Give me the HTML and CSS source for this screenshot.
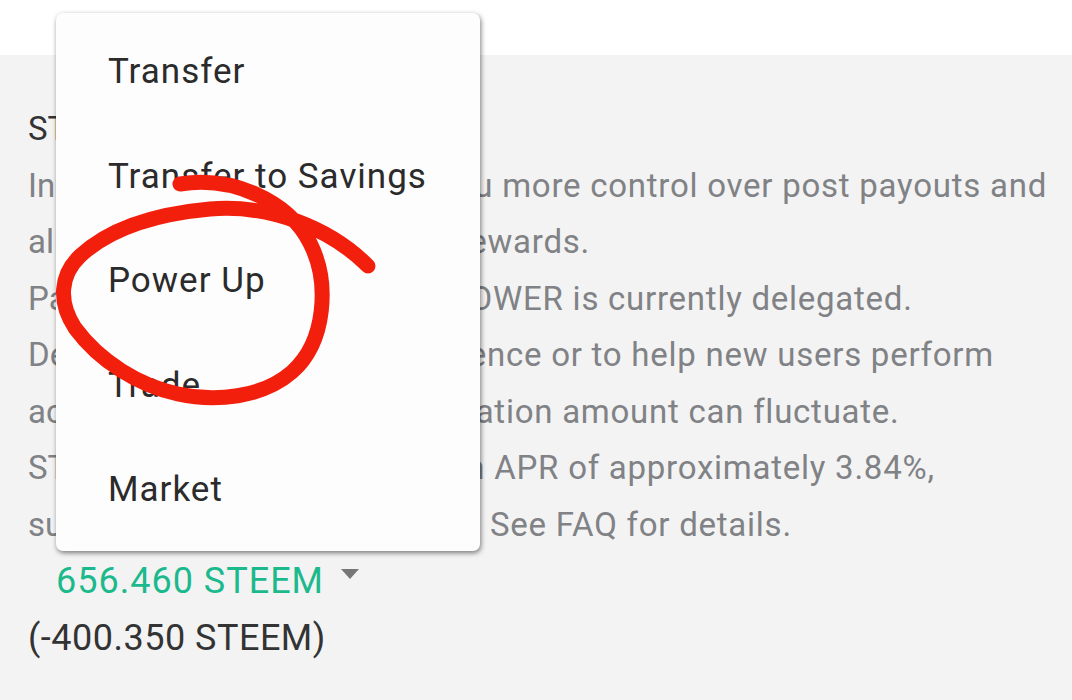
FILE: index.html
```html
<!DOCTYPE html>
<html lang="en">
<head>
    <meta charset="UTF-8">
    <meta name="viewport" content="width=device-width, initial-scale=1.0">
    <title>Steem Power</title>
    <link rel="stylesheet" href="styles.css">
</head>
<body>
    <div class="topbar"></div>

    <div class="wallet">
        <h2 class="title">STEEM POWER</h2>
        <!-- each line is split where the menu covers it, the tail is the part still in view -->
        <p class="desc">
            <span>Influence tokens which give yo<span class="tail">u more control over post payouts and</span></span>
            <span>allow you to earn on curation r<span class="tail">ewards.</span></span>
            <span>Part of stevenson7's STEEM P<span class="tail">OWER is currently delegated.</span></span>
            <span>Delegation is donated for infl<span class="tail">uence or to help new users perform</span></span>
            <span>actions on Steemit. Your dele<span class="tail">gation amount can fluctuate.</span></span>
            <span>STEEM POWER increases at a<span class="tail">n APR of approximately 3.84%,</span></span>
            <span>subject to blockchain variance<span class="tail">. See FAQ for details.</span></span>
        </p>
        <div class="amount">
            <span class="value">656.460 STEEM</span>
            <span class="caret"></span>
        </div>
        <div class="delegated">(-400.350 STEEM)</div>
    </div>

    <ul class="menu">
        <li>Transfer</li>
        <li>Transfer to Savings</li>
        <li>Power Up</li>
        <li>Trade</li>
        <li>Market</li>
    </ul>

    <!-- hand drawn mark over the menu -->
    <svg class="scribble" width="1072" height="700" viewBox="0 0 1072 700">
        <path d="M180,184 C232,176 288,200 310,243 C330,282 326,342 292,372 C262,398 215,402 178,394 C140,386 100,362 75,328 C58,302 60,275 80,256 C110,228 155,214 210,209 C270,204 330,228 368,266"
              fill="none" stroke="#f31f0d" stroke-width="15" stroke-linecap="round" stroke-linejoin="round"/>
    </svg>
</body>
</html>
```

FILE: styles.css
```css
body {
    margin: 0;
    padding: 0;
    background-color: #f3f3f3;
    font-family: Roboto, "Liberation Sans", Arial, sans-serif;
    width: 1072px;
    height: 700px;
    overflow: hidden;
    position: relative;
}

.topbar {
    height: 55px;
    background-color: #ffffff;
}

.wallet {
    padding: 46px 0 0 28px;
}
.title {
    margin: 0;
    font-size: 33px;
    font-weight: 400;
    line-height: 56.5px;
    color: #333;
}
.desc {
    margin: 0;
    font-size: 33px;
    line-height: 56.5px;
    color: #808285;
}
.desc > span {
    display: block;
    white-space: nowrap;
}
.desc .tail {
    letter-spacing: 0.75px;
}

.amount {
    display: flex;
    align-items: center;
    padding-left: 28px;
    height: 56px;
}
.amount .value {
    font-size: 36px;
    letter-spacing: 1px;
    color: #1cb98d;
}
.caret {
    margin: 0 0 14px 17px;
    width: 0;
    height: 0;
    border-left: 9px solid transparent;
    border-right: 9px solid transparent;
    border-top: 10px solid #777;
}
.delegated {
    font-size: 36px;
    letter-spacing: 0.5px;
    line-height: 58px;
    color: #333;
}

.menu {
    position: absolute;
    left: 56px;
    top: 13px;
    width: 424px;
    margin: 0;
    padding: 7px 0 8px;
    list-style: none;
    background-color: #fdfdfd;
    border-radius: 7px;
    box-shadow: 1px 2px 5px rgba(0, 0, 0, 0.5);
}
.menu li {
    padding-left: 52px;
    height: 104.5px;
    line-height: 104.5px;
    font-size: 35px;
    letter-spacing: 1px;
    color: #2b2b2b;
}

.scribble {
    position: absolute;
    left: 0;
    top: 0;
    pointer-events: none;
}
```
